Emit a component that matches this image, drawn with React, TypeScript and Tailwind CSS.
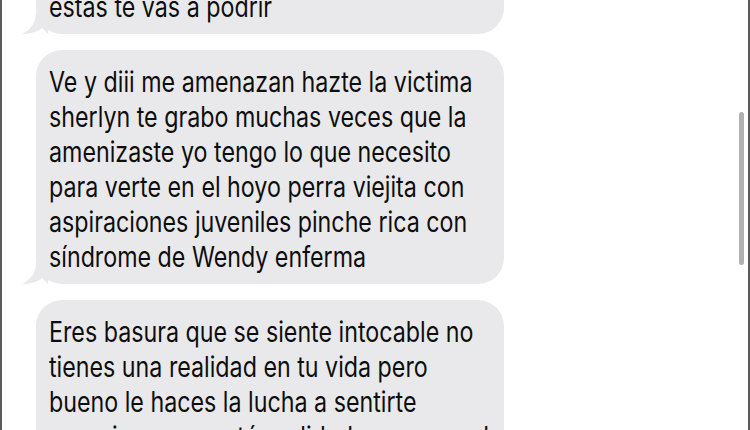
import React from "react"

const bubbles: string[][] = [
  ["estas te vas a podrir"],
  [
    "Ve y diii me amenazan hazte la victima",
    "sherlyn te grabo muchas veces que la",
    "amenizaste yo tengo lo que necesito",
    "para verte en el hoyo perra viejita con",
    "aspiraciones juveniles pinche rica con",
    "síndrome de Wendy enferma",
  ],
  [
    "Eres basura que se siente intocable no",
    "tienes una realidad en tu vida pero",
    "bueno le haces la lucha a sentirte",
    "superior pero en tú realidad no eres nada",
  ],
]

function Tail() {
  return (
    <svg
      className="absolute bottom-0 left-[-14px]"
      width="26"
      height="22"
      viewBox="0 0 26 22"
    >
      <path
        d="M14 0 C14 10 10 17 0 22 C8 22 15 20 20 16 C22 18 24 20 26 22 L26 0 Z"
        fill="#e9e9eb"
      />
    </svg>
  )
}

export default function App() {
  return (
    <div className="w-[750px] h-[430px] overflow-hidden bg-white border-l-2 border-r-2 border-[#5a5a5a] relative">
      <div className="flex flex-col gap-[16px] pl-[34px] mt-[-25px]">
        {bubbles.map((lines, i) => (
          <div
            key={i}
            className="relative w-[468px] rounded-[26px] bg-[#e9e9eb] pl-[13px] pr-[12px] pt-[15px] pb-[9px] text-[28px] leading-[35px] text-[#0e0e0e]"
            style={{ fontFamily: "Inter, 'Liberation Sans', sans-serif" }}
          >
            {lines.map((l, j) => (
              <div key={j} className="whitespace-nowrap origin-left scale-x-[0.83]">
                {l}
              </div>
            ))}
            {i < 2 && <Tail />}
          </div>
        ))}
      </div>
      {/* scrollbar */}
      <div className="absolute left-[737px] top-[112px] w-[5px] h-[153px] rounded-full bg-[#b0b0b2]" />
    </div>
  )
}
